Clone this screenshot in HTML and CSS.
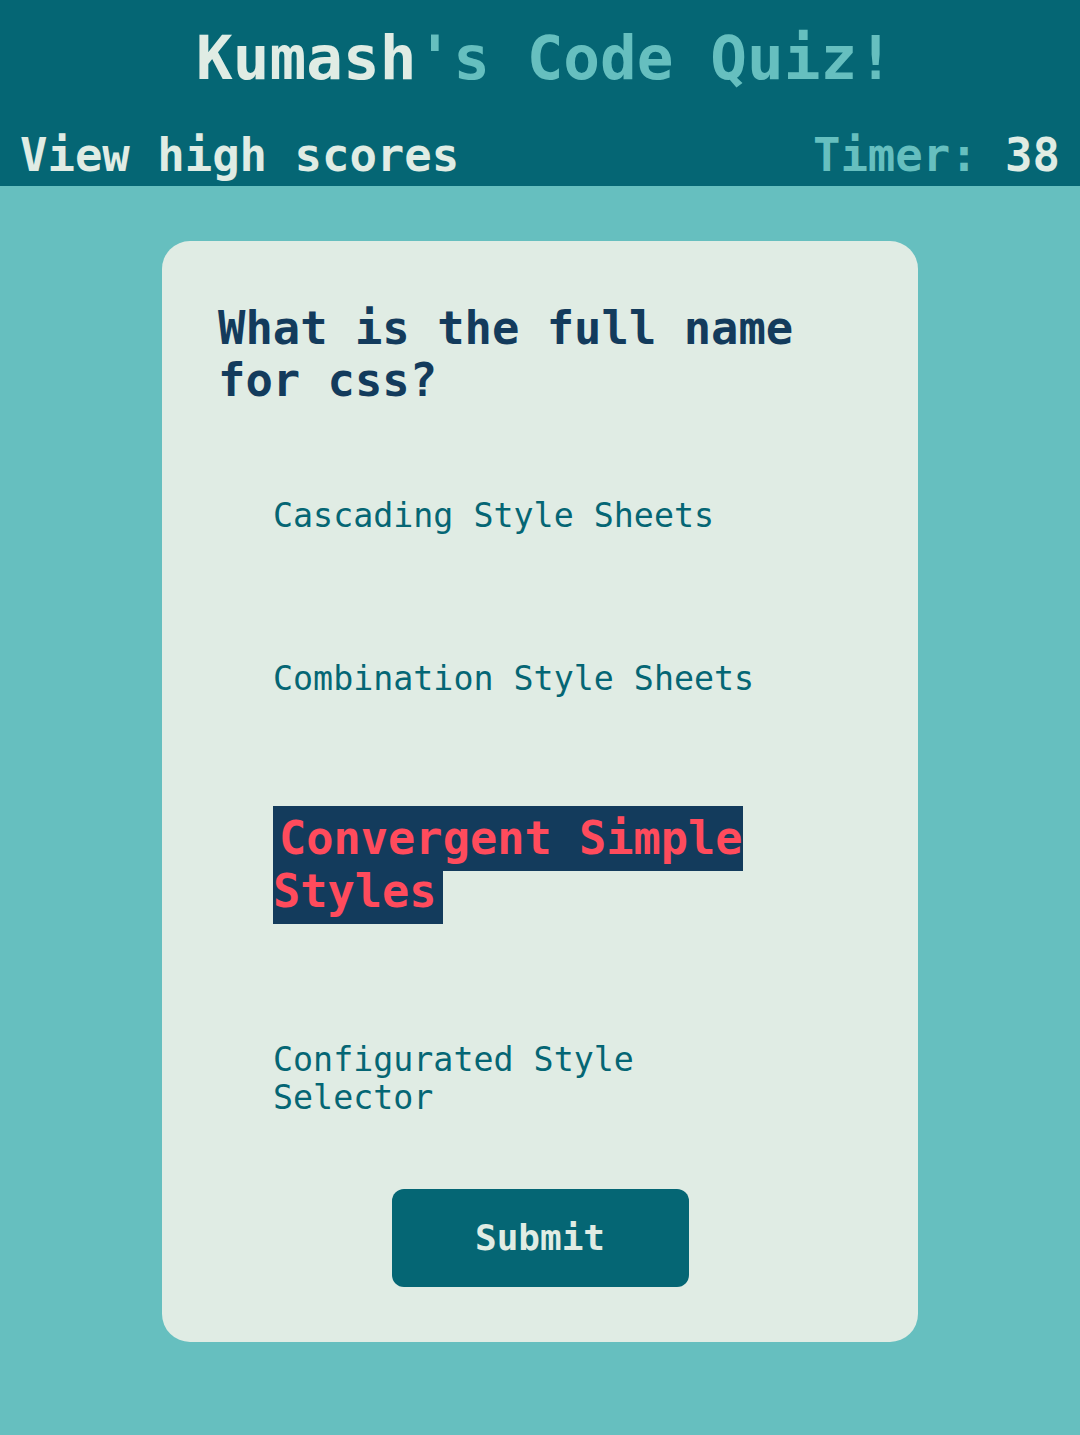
FILE: index.html
```html
<!DOCTYPE html>
<html lang="en">
<head>
<meta charset="utf-8">
<title>Kumash's Code Quiz!</title>
<link rel="stylesheet" href="styles.css">
</head>
<body>
<header class="topbar">
  <h1 class="title"><span class="title-main">Kumash</span><span class="title-accent">'s Code Quiz!</span></h1>
  <div class="nav-row">
    <a class="highscores" href="#">View high scores</a>
    <div class="timer"><span class="timer-label">Timer:</span> <span class="timer-value">38</span></div>
  </div>
</header>
<main class="stage">
  <section class="card">
    <h2 class="question">What is the full name for css?</h2>
    <ul class="options">
      <li class="option">Cascading Style Sheets</li>
      <li class="option">Combination Style Sheets</li>
      <li class="option option-selected"><span class="option-mark">Convergent Simple Styles</span></li>
      <li class="option">Configurated Style Selector</li>
    </ul>
    <div class="actions">
      <button class="submit" type="button">Submit</button>
    </div>
  </section>
</main>
</body>
</html>
```
FILE: styles.css
```css
html, body {
  margin: 0;
  padding: 0;
}
body {
  background: #66bfbf;
  font-family: "DejaVu Sans Mono", "Liberation Mono", monospace;
  min-height: 1435px;
}
.topbar {
  background: #056674;
  height: 186px;
  box-sizing: border-box;
  padding: 22px 20px 0 20px;
}
.title {
  margin: 0;
  text-align: center;
  font-size: 61px;
  font-weight: bold;
  line-height: 72px;
  padding-left: 10px;
}
.title-main { color: #e0ece4; }
.title-accent { color: #66bfbf; }
.nav-row {
  display: flex;
  justify-content: space-between;
  align-items: baseline;
  margin-top: 35px;
  font-size: 45.6px;
  font-weight: bold;
  line-height: 53px;
}
.highscores {
  color: #e0ece4;
  text-decoration: none;
}
.timer-label { color: #66bfbf; }
.timer-value { color: #e0ece4; }
.stage {
  padding-top: 55px;
  display: flex;
  justify-content: center;
}
.card {
  width: 756px;
  height: 1101px;
  box-sizing: border-box;
  background: #e0ece4;
  border-radius: 28px;
  padding: 62px 56px 0 56px;
}
.question {
  margin: 0;
  font-size: 45.5px;
  font-weight: bold;
  line-height: 52.4px;
  color: #133b5c;
}
.options {
  list-style: none;
  margin: 89px 0 0 0;
  padding: 0 0 0 55px;
  width: 500px;
  display: flex;
  flex-direction: column;
  gap: 124.6px;
}
.option {
  font-size: 33.3px;
  line-height: 38.4px;
  color: #056674;
}
.option-selected {
  font-size: 45.3px;
  line-height: 52.4px;
  font-weight: bold;
  margin-top: -9.4px;
  margin-bottom: -2px;
}
.option-mark {
  background: #133b5c;
  color: #ff4b5c;
  padding: 6px;
}
.actions {
  display: flex;
  justify-content: center;
  margin-top: 71px;
}
.submit {
  width: 297px;
  height: 98px;
  border: none;
  border-radius: 12px;
  background: #056674;
  color: #e0ece4;
  font-family: "DejaVu Sans Mono", "Liberation Mono", monospace;
  font-size: 36px;
  font-weight: bold;
  cursor: pointer;
}
```
